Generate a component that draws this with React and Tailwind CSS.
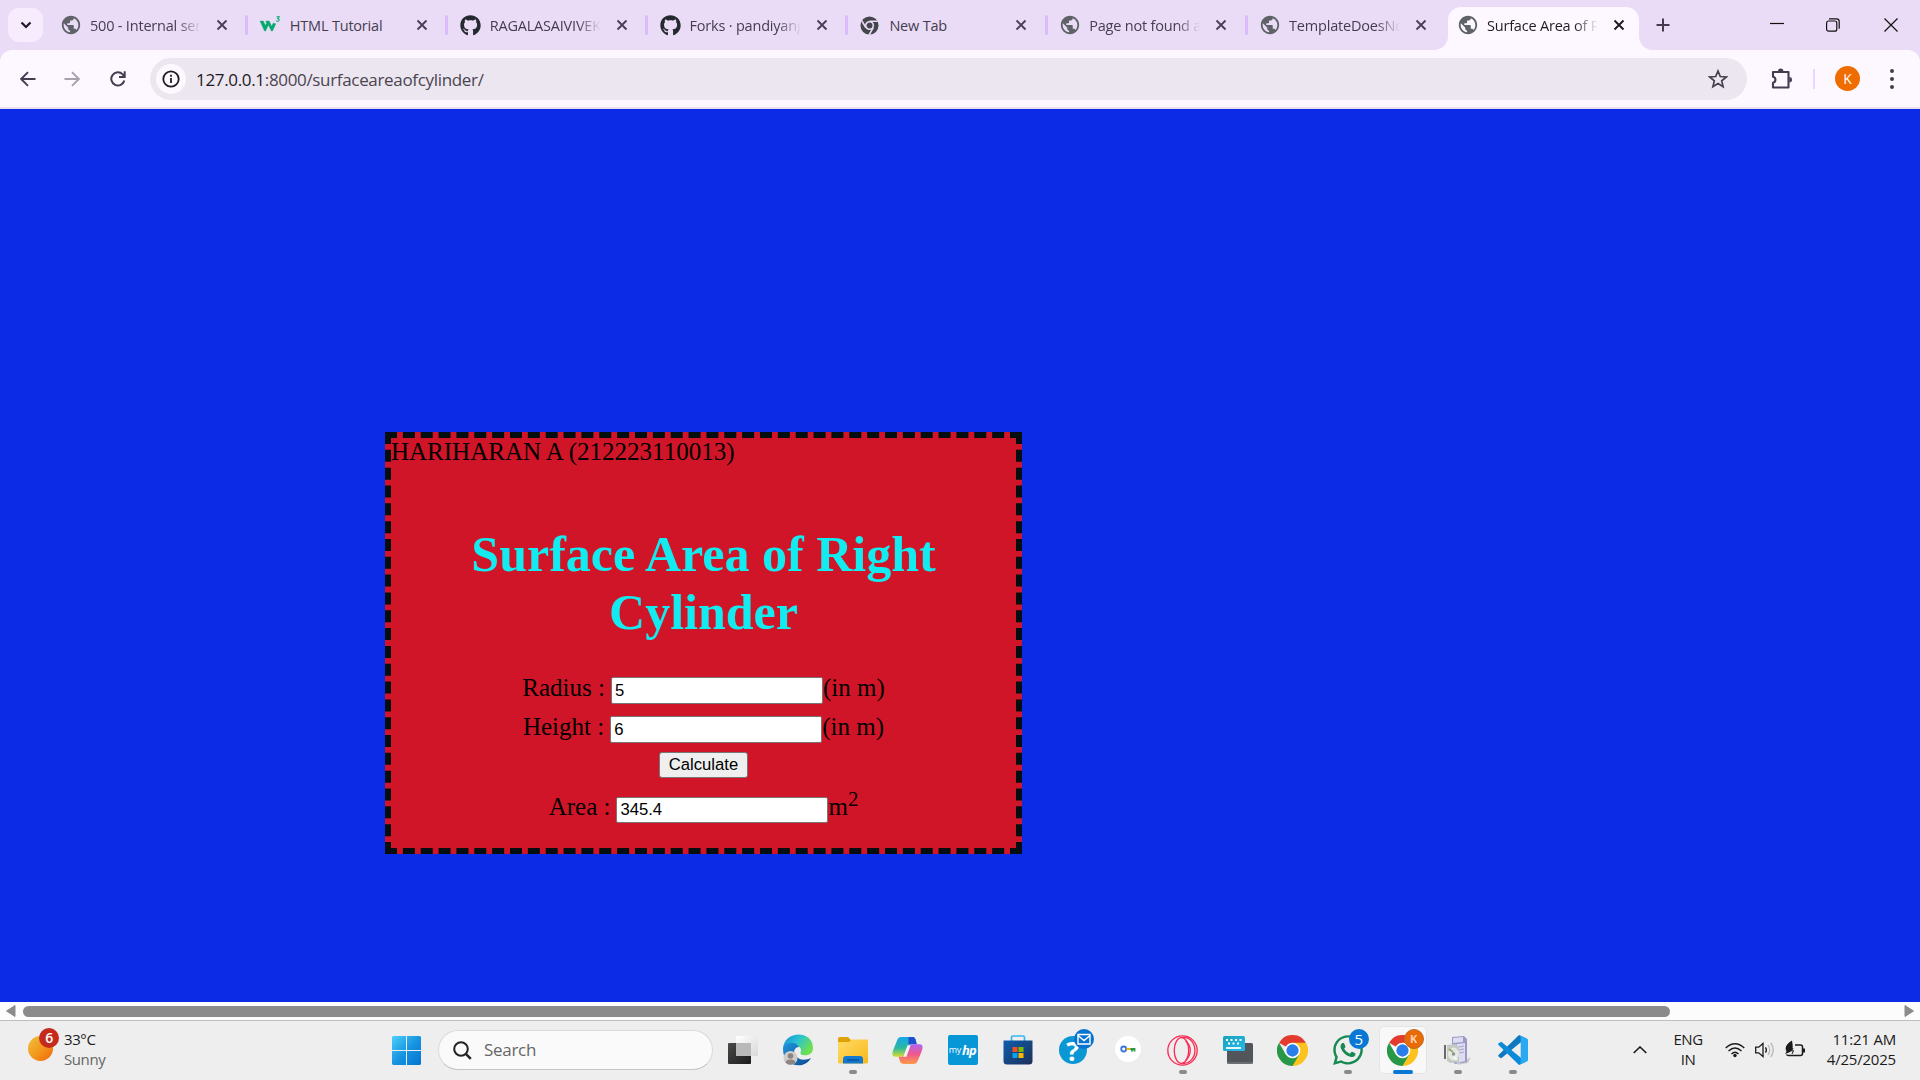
import React from "react";
import { FaGithub, FaWhatsapp } from "react-icons/fa";
import { MdPublic } from "react-icons/md";

function Globe() {
  return <MdPublic size={22} color="#5f6368" className="shrink-0" />;
}

function W3() {
  return (
    <svg viewBox="0 0 20 18" className="h-[18px] w-5 overflow-visible">
      <path d="M0 5h3.300l2 4.600 1.300-2.600-.8-2h3.400l2.400 5.300 1.700-3.300q1.200 1 2.500.7L12.500 15h-1.100L8.400 9 5.600 15H4.500Z" fill="#04aa6d" stroke="#04aa6d" strokeWidth=".4" />
      <path d="M16.500 .8h2.700l-1.500 1.700c2.200.2 1.700 3-.2 2.800-.6 0-1-.2-1.300-.6" fill="none" stroke="#04aa6d" strokeWidth="1.100" />
    </svg>
  );
}

function ChromeMono() {
  return (
    <svg viewBox="0 0 20 20" className="size-[19px]">
      <circle cx="10" cy="10" r="9.500" fill="#43464b" />
      <circle cx="10" cy="10" r="4" fill="#43464b" stroke="#eadcf6" strokeWidth="1.700" />
      <path d="M10 5.500h8.800M6.100 12.200 1.900 5M13.900 12.200 9.600 19.800" stroke="#eadcf6" strokeWidth="1.700" />
    </svg>
  );
}

function Chrome() {
  return (
    <svg viewBox="0 0 48 48" className="size-[31px]">
      <path d="M24 24 3.200 12A24 24 0 0 1 44.800 12Z" fill="#e33b2e" />
      <path d="M24 12h20.800A24 24 0 0 1 24 48l-3-10 13.400-8Z" fill="#fcc31e" />
      <path d="M3.200 12 13.600 30 24 36l10.400-6L24 48A24 24 0 0 1 3.200 12Z" fill="#279847" />
      <circle cx="24" cy="24" r="12" fill="#fff" />
      <circle cx="24" cy="24" r="9.500" fill="#2b7de9" />
    </svg>
  );
}

function Cross({ active }) {
  return (
    <svg viewBox="0 0 12 12" className="size-3">
      <path d="m1.500 1.500 9 9m0-9-9 9" stroke={active ? "#1d1a22" : "#4a3f55"} strokeWidth="1.900" />
    </svg>
  );
}

const tabs = [
  ["500 - Internal server", <Globe />, true],
  ["HTML Tutorial", <W3 />],
  ["RAGALASAIVIVEK", <FaGithub size={21} color="#24292f" />, true],
  ["Forks · pandiyanga", <FaGithub size={21} color="#24292f" />, true],
  ["New Tab", <ChromeMono />],
  ["Page not found at", <Globe />, true],
  ["TemplateDoesNotE", <Globe />, true],
];

function Tab({ label, icon, fade, active }) {
  return (
    <div className="flex min-w-0 flex-1 items-center">
      <div className="flex w-[21px] shrink-0 justify-center">{icon}</div>
      <div
        className={
          "ml-[9px] w-[112px] overflow-hidden whitespace-nowrap pt-px text-[14.5px] leading-5 tracking-[-0.2px] " +
          (active ? "text-[#1f1b24] " : "text-[#463c50] ") +
          (fade ? "[mask-image:linear-gradient(to_right,black_78%,transparent_99%)]" : "")
        }
      >
        {label}
      </div>
      <div className="ml-[14px] shrink-0"><Cross active={active} /></div>
    </div>
  );
}

function TabStrip() {
  return (
    <div className="flex h-[50px] bg-[#eadcf6]">
      <div className="ml-2 mt-2 flex h-[34px] w-[35px] items-center justify-center rounded-[11px] bg-[#f7ecfe]">
        <svg viewBox="0 0 12 8" className="h-2 w-3"><path d="m1.500 1.500 4.500 4.500 4.500-4.500" fill="none" stroke="#1d1a22" strokeWidth="2.200" /></svg>
      </div>
      <div className="ml-[17px] flex w-[1388px]">
        {tabs.map(([label, icon, fade], i) => (
          <div key={label} className="flex h-[50px] w-[199.850px] shrink-0 items-center">
            <Tab label={label} icon={icon} fade={fade} />
            {i < 6 && <div className="mr-[11.500px] h-5 w-[3px] rounded-full bg-[#d9bcfc]" />}
          </div>
        ))}
      </div>
      <div className="relative mt-[7px] flex h-[43px] w-[191px] items-center rounded-t-[13px] bg-[#fdf7ff] pb-[7px] pl-[9px]">
        <svg viewBox="0 0 14 14" className="absolute -left-[14px] bottom-0 size-[14px]"><path d="M14 0v14H0A14 14 0 0 0 14 0Z" fill="#fdf7ff" /></svg>
        <svg viewBox="0 0 14 14" className="absolute -right-[14px] bottom-0 size-[14px]"><path d="M0 0v14h14A14 14 0 0 1 0 0Z" fill="#fdf7ff" /></svg>
        <Tab label="Surface Area of Right" icon={<Globe />} fade active />
      </div>
      <div className="ml-[17px] flex items-center">
        <svg viewBox="0 0 14 14" className="size-[14px]"><path d="M7 .5v13M.5 7h13" stroke="#463c50" strokeWidth="2" /></svg>
      </div>
      <div className="ml-auto flex items-center">
        <svg viewBox="0 0 14 14" className="mr-[42px] size-[14px]"><path d="M0 5.500h14" stroke="#111" strokeWidth="1.200" /></svg>
        <svg viewBox="0 0 14 14" className="mr-[44px] size-[14px]" fill="none" stroke="#111" strokeWidth="1.200"><rect x=".6" y="3" width="10.200" height="10.200" rx="2" /><path d="M3 .8h7.500a2.700 2.700 0 0 1 2.700 2.700v7.300" /></svg>
        <svg viewBox="0 0 14 14" className="mr-[22px] size-[14px]"><path d="m.5.5 13 13m0-13-13 13" stroke="#111" strokeWidth="1.200" /></svg>
      </div>
    </div>
  );
}

function Toolbar() {
  return (
    <div className="bg-[#eadcf6]">
      <div className="flex h-[59px] items-center rounded-t-[12px] border-b-2 border-[#e8e0ee] bg-[#fdf7ff]">
        <svg viewBox="0 0 16 16" className="ml-5 size-4 shrink-0" fill="none" stroke="#463c50" strokeWidth="1.900"><path d="M15.500 8H1.500M8 1.200 1.200 8 8 14.800" /></svg>
        <svg viewBox="0 0 16 16" className="ml-7 size-4 shrink-0" fill="none" stroke="#a9a2ae" strokeWidth="1.900"><path d="M.5 8h14M8 1.200 14.800 8 8 14.800" /></svg>
        <svg viewBox="0 0 16 16" className="ml-[30px] size-4 shrink-0" fill="none" stroke="#463c50" strokeWidth="2"><path d="M14.300 9.500A6.600 6.600 0 1 1 12.700 3.400L14.500 5.500M14.700 .3v5.800H9" /></svg>
        <div className="ml-[24px] flex h-[42px] w-[1597px] shrink-0 items-center rounded-full bg-[#ece6f1]">
          <div className="ml-[6px] flex size-[30px] items-center justify-center rounded-full bg-[#fdf7ff]">
            <svg viewBox="0 0 18 18" className="size-[18px]"><circle cx="9" cy="9" r="7.700" fill="none" stroke="#1d1a22" strokeWidth="1.800" /><path d="M9 8v5M9 4.800v1.900" stroke="#1d1a22" strokeWidth="1.800" /></svg>
          </div>
          <div className="ml-[10px] pt-[2px] text-[17px] leading-6 tracking-[-0.330px] text-[#4b444f]"><span className="text-[#1d1a22]">127.0.0.1</span>:8000/surfaceareaofcylinder/</div>
          <svg viewBox="0 0 20 20" className="ml-auto mr-[19px] size-5" fill="none" stroke="#463f4c" strokeWidth="1.700"><path d="m10 2 2.300 5.500 6 .5-4.600 3.900 1.400 5.800L10 14.600l-5.100 3.100 1.400-5.800L1.700 8l6-.5Z" /></svg>
        </div>
        <svg viewBox="0 0 22 22" className="ml-[23px] size-[22px] shrink-0" fill="none" stroke="#463c50" strokeWidth="2.100"><path d="M3 4h15.500v15.500H3v-4.800c3.200-.5 3.200-5.400 0-5.900Z" strokeLinejoin="round" /><path d="M8 3.200a2.700 2.700 0 0 1 5.400 0ZM19.300 9a2.700 2.700 0 0 1 0 5.400Z" fill="#463c50" stroke="none" /></svg>
        <div className="ml-[21px] h-5 w-[2px] bg-[#e8d7fb]" />
        <div className="ml-[20px] flex size-[25px] items-center justify-center rounded-full bg-[#ef6c00] text-[14px] text-white">K</div>
        <div className="ml-[30px] flex flex-col gap-1"><i className="size-1 rounded-full bg-[#463c50]" /><i className="size-1 rounded-full bg-[#463c50]" /><i className="size-1 rounded-full bg-[#463c50]" /></div>
      </div>
    </div>
  );
}

const field = "w-[212px] border border-[#767676] rounded-[2px] bg-white pl-[3px] text-[16.667px] text-black [font-family:'Liberation_Sans',Arial,sans-serif] outline-none";

function Page() {
  return (
    <main className="h-[893px] bg-[#0b2be6] pl-[385px] pt-[323px] text-[25px] leading-[29px] text-black [font-family:'Liberation_Serif','Times_New_Roman',serif]">
      <div className="h-[422px] w-[637px] border-[6px] border-dashed border-[#040e11] bg-[#d11528]">
        <div className="-mt-px">HARIHARAN A (212223110013)</div>
        <h1 className="mt-[59px] px-10 text-center text-[50px] font-bold leading-[58px] text-[#12ebf0]">Surface Area of Right<br />Cylinder</h1>
        <div className="mt-[36px] flex h-[27px] justify-center"><label className="-mt-[4px] mr-[6px]">Radius :</label><input className={field} defaultValue="5" /><span className="-mt-[4px]">(in m)</span></div>
        <div className="mt-[12px] flex h-[27px] justify-center"><label className="-mt-[4px] mr-[6px]">Height :</label><input className={field} defaultValue="6" /><span className="-mt-[4px]">(in m)</span></div>
        <div className="mt-[9px] flex justify-center"><button className="h-[26px] w-[89px] rounded-[3px] border border-[#767676] bg-[#efefef] text-[16.667px] leading-6 [font-family:'Liberation_Sans',Arial,sans-serif]">Calculate</button></div>
        <div className="mt-[19px] flex h-[26px] justify-center"><label className="-mt-[5px] mr-[6px]">Area :</label><input className={field + " pb-px"} defaultValue="345.4" /><span className="-mt-[5px]">m<sup className="relative -top-[9px] align-baseline text-[20.800px] leading-none">2</sup></span></div>
      </div>
    </main>
  );
}

function ScrollBar() {
  return (
    <div className="flex h-[18px] items-center bg-[#fcfcfc]">
      <svg viewBox="0 0 10 12" className="ml-[6px] h-3 w-[10px] shrink-0"><path d="M9 .5v11L.5 6Z" fill="#8b8b8b" stroke="#8b8b8b" strokeLinejoin="round" /></svg>
      <div className="ml-[7px] h-[11px] w-[1647px] rounded-full bg-[#8b8b8b]" />
      <svg viewBox="0 0 10 12" className="ml-auto mr-[6px] h-3 w-[10px] shrink-0"><path d="M1 .5v11L9.500 6Z" fill="#8b8b8b" stroke="#8b8b8b" strokeLinejoin="round" /></svg>
    </div>
  );
}

function TaskView() {
  return (
    <svg viewBox="0 0 30 30" className="size-[30px]">
      <defs>
        <linearGradient id="tv1" x2="1" y2="1"><stop stopColor="#4a4a48" /><stop offset="1" stopColor="#1b1b1b" /></linearGradient>
        <linearGradient id="tv2" x2="1" y2="1"><stop stopColor="#fff" /><stop offset="1" stopColor="#d8d8d8" /></linearGradient>
      </defs>
      <rect x="0" y="8" width="23" height="21" rx="1" fill="url(#tv1)" />
      <rect x="8" y="1" width="22" height="20" rx="1" fill="url(#tv2)" />
      <path d="M8 8h15v13H8Z" fill="#b9b9b9" />
    </svg>
  );
}

function Edge() {
  return (
    <svg viewBox="0 0 32 32" className="size-8">
      <defs>
        <linearGradient id="eg1" x2="1" y2=".5"><stop stopColor="#1387d8" /><stop offset=".5" stopColor="#2bc3d2" /><stop offset="1" stopColor="#6ee04f" /></linearGradient>
        <linearGradient id="eg2" x2="1" y2="1"><stop stopColor="#1f95dc" /><stop offset="1" stopColor="#0b4a94" /></linearGradient>
      </defs>
      <path d="M1 15C2-4 31-4 31 14c0 6-5 8-10 7-4-1-2-3-2-5 0-5-12-8-18-1Z" fill="url(#eg1)" />
      <path d="M1 15c0-7 13-9 16-2-4 0-6 4-4 8 3 5 10 6 16 3-4 7-12 9-19 6C4 27 1 22 1 15Z" fill="url(#eg2)" />
      <circle cx="8.500" cy="24" r="7" fill="#cfccc9" />
      <circle cx="8.500" cy="22" r="2.800" fill="#8a8580" /><path d="M3.500 28.500c0-4 10-4 10 0-3 3-7 3-10 0Z" fill="#8a8580" />
    </svg>
  );
}

function Folder() {
  return (
    <svg viewBox="0 0 30 30" className="size-[30px]">
      <defs><linearGradient id="fo1" x2="1" y2="1"><stop stopColor="#ffdc66" /><stop offset="1" stopColor="#f9b81a" /></linearGradient></defs>
      <path d="M0 4q0-2 2-2h8l3 3h13v8H0Z" fill="#e0a008" />
      <path d="M0 8q0-1 1-1h10l3-2.500h15q1 0 1 1V27q0 1.500-1.500 1.500h-27Q0 28.500 0 27Z" fill="url(#fo1)" />
      <path d="M5 28.500V24q0-3 3-3h14q3 0 3 3v4.500Z" fill="#1379cf" /><path d="M9 25h12" stroke="#0b4d92" strokeWidth="1.400" />
    </svg>
  );
}

function Copilot() {
  return (
    <svg viewBox="0 0 30 30" className="size-[31px]">
      <defs>
        <linearGradient id="cp1" x2="0" y2="1"><stop stopColor="#19a5ec" /><stop offset=".55" stopColor="#28b9a0" /><stop offset="1" stopColor="#d8dd2f" /></linearGradient>
        <linearGradient id="cp2" x2="0" y2="1"><stop stopColor="#b264ee" /><stop offset=".5" stopColor="#f0588e" /><stop offset="1" stopColor="#ff9a48" /></linearGradient>
      </defs>
      <path d="M9 2h11c2 0 2.500 1.500 3 3l1 4h-4c-3 0-4 2-5 5l-2 6c-1 1-2 1-4 1H3c-3 0-3-3-2-6L5 5q1-3 4-3Z" fill="url(#cp1)" />
      <path d="M16 2h4c2 0 2.500 1.500 3 3l1 4h-8Z" fill="#1f50cf" />
      <path d="M21 28H11c-2 0-3-1.500-3.500-3l-1-4H10c3 0 4-2 5-5l2-6c1-1 2-1 4-1h6c3 0 3 3 2 6l-4 10q-1 3-4 3Z" fill="url(#cp2)" />
      <path d="M15 10h3l-4 11h-3Z" fill="#f6f2f7" />
    </svg>
  );
}

function Store() {
  return (
    <svg viewBox="0 0 30 30" className="size-[30px]">
      <defs><linearGradient id="st1" x2="1" y2="1"><stop stopColor="#0d5fae" /><stop offset="1" stopColor="#1d2f57" /></linearGradient></defs>
      <path d="M8.500 6.500v-4q0-1.500 1.500-1.500h10q1.500 0 1.500 1.500v4" fill="none" stroke="#35b6f2" strokeWidth="1.700" />
      <path d="M.5 5.500h29V26q0 3.500-3.500 3.500H4Q.5 29.500.5 26Z" fill="url(#st1)" />
      <path d="M9.500 12h5v5h-5Z" fill="#f25022" /><path d="M15.500 12h5v5h-5Z" fill="#7fba00" /><path d="M9.500 18h5v5h-5Z" fill="#00a4ef" /><path d="M15.500 18h5v5h-5Z" fill="#ffb900" />
    </svg>
  );
}

function HpHelp() {
  return (
    <div className="relative flex size-7 items-center justify-center rounded-full bg-[#0b96d4] text-[27px] font-bold leading-none text-white">
      ?
      <svg viewBox="0 0 20 20" className="absolute -right-[7px] -top-[7px] size-5"><circle cx="10" cy="10" r="10" fill="#0874d1" /><path d="M4 5.500h12v9.500H4Zm0 1 6 5 6-5" fill="none" stroke="#fff" strokeWidth="1.400" /></svg>
    </div>
  );
}

function KeyApp() {
  return (
    <svg viewBox="0 0 26 26" className="mb-[3px] size-[26px]">
      <circle cx="13" cy="13" r="13" fill="#fff" />
      <circle cx="8.700" cy="13" r="2.500" fill="none" stroke="#3978e0" strokeWidth="1.800" />
      <path d="M11.500 13H16" stroke="#f0b51c" strokeWidth="2" /><path d="M15.500 13h4.800M17 13v2.500M19.500 12v3.500" stroke="#2c9b49" strokeWidth="1.900" />
    </svg>
  );
}

function Opera() {
  return (
    <svg viewBox="0 0 30 30" className="size-[31px]" fill="none" stroke="#fa2c55" strokeWidth="1.300">
      <circle cx="15" cy="15" r="14.200" /><ellipse cx="14" cy="15" rx="7" ry="12.500" /><path d="M14 2.500C23 1 27 9 27 15s-4 13.500-13 12.500M18 5.500c6 5 6 14 0 19" />
    </svg>
  );
}

function KeyboardApp() {
  return (
    <svg viewBox="0 0 30 30" className="size-[30px]">
      <defs><linearGradient id="kb1" x2="1" y2="1"><stop stopColor="#18a5b8" /><stop offset="1" stopColor="#24b7ee" /></linearGradient></defs>
      <rect x="4" y="8" width="26" height="21" rx="1.500" fill="#52565b" /><path d="M4 28h26" stroke="#85898d" />
      <rect y="1" width="22" height="15" rx="1.500" fill="url(#kb1)" />
      <path d="M3 5h16M5 8.500h13" stroke="#fff" strokeWidth="1.800" strokeDasharray="2 2.500" /><path d="M3 13h15" stroke="#fff" strokeWidth="1.800" />
    </svg>
  );
}

function Installer() {
  return (
    <svg viewBox="0 0 28 30" className="h-[30px] w-7">
      <path d="m20 26 7-4-3 6-11 2Z" fill="#c9c9c9" />
      <path d="m8 2 12-1 3 3v23l-12 2-3-3Z" fill="#9b9ac6" /><path d="m9 3 10-1v5L9 8Zm4 6 8-1v18l-8 2Z" fill="#dddcf0" /><path d="m15 12 5-1m-5 4 5-1m-5 4 5-1" stroke="#a6a4cc" />
      <path d="m3 10 9-1 3 3v15l-9 1-3-2Z" fill="#c3cac3" /><path d="M4 19a5.500 6.500 0 1 1 11 0 5.500 6.500 0 1 1-11 0Z" fill="#e6e8e2" /><circle cx="9.500" cy="19" r="1.700" fill="#8d948f" /><path d="m5 14 4 3" stroke="#93b070" strokeWidth="2" /><path d="m10 22 3 3" stroke="#f8f8f8" strokeWidth="2" /><path d="M1 10v14" stroke="#3d3d3d" strokeWidth="1.500" />
    </svg>
  );
}

function VsCode() {
  return (
    <svg viewBox="0 0 30 30" className="size-[30px]">
      <path d="M22.500 7.500 3.300 23.200 1 22q-1.500-1-.2-2.300L21 0l6 3Z" fill="#0d78c0" />
      <path d="M22.500 22.500 3.300 6.800 1 8q-1.500 1-.2 2.300L21 30l6-3Z" fill="#0b8ad8" />
      <path d="m21.500.2 7.500 3.300q1 .5 1 1.800v19.400q0 1.300-1 1.800l-7.500 3.300q1.200-.8 1.200-2V2.200q0-1.200-1.200-2Z" fill="#2aa8f2" />
    </svg>
  );
}

function WhatsApp() {
  return (
    <div className="relative">
      <FaWhatsapp size={34} color="#178a53" />
      <div className="absolute -right-[4px] -top-[4px] flex size-5 items-center justify-center rounded-full bg-[#0878d4] text-[15px] text-white">5</div>
    </div>
  );
}

function ActiveChrome() {
  return (
    <div className="relative flex size-12 items-center justify-center rounded-[5px] border border-[#e5e5e5] bg-[#f8f8f8]">
      <Chrome />
      <div className="absolute right-[2px] top-[2px] flex size-5 items-center justify-center rounded-full border border-[#b96c2d] bg-[#ea6a05] text-[11px] font-bold text-[#fbd0b0]">K</div>
    </div>
  );
}

const apps = [
  [<TaskView />], [<Edge />], [<Folder />, 1], [<Copilot />],
  [<div className="flex size-[30px] items-center justify-center gap-px rounded-[2px] bg-[#0796d6] text-white"><span className="text-[9px]">my</span><span className="text-[13px] font-bold italic tracking-tighter">hp</span></div>],
  [<Store />], [<HpHelp />], [<KeyApp />], [<Opera />, 1], [<KeyboardApp />], [<Chrome />], [<WhatsApp />, 1], [<ActiveChrome />, 2], [<Installer />, 1], [<VsCode />, 1],
];

function Taskbar() {
  return (
    <footer className="flex h-[60px] border-t border-[#bfbfbf] bg-[#eeeeee] text-[15px] leading-5 tracking-[-0.4px] text-[#1b1b1b]">
      <div className="flex w-[392px] shrink-0">
        <div className="relative ml-7 mt-[15px] size-[25px] rounded-full bg-linear-to-br from-[#eec13a] via-[#f29a1d] to-[#f2600c]">
          <div className="absolute -top-[8px] left-[11px] flex size-5 items-center justify-center rounded-full bg-[#c42b1c] text-[14px] font-semibold text-white">6</div>
        </div>
        <div className="ml-[11px] mt-[8px]"><div>33°C</div><div className="text-[#666]">Sunny</div></div>
      </div>
      <svg viewBox="0 0 29 29" className="mt-[15px] size-[29px] shrink-0">
        <defs><linearGradient id="win" x2="1" y2="1"><stop stopColor="#4cd0fb" /><stop offset=".5" stopColor="#1795e0" /><stop offset="1" stopColor="#0473d2" /></linearGradient></defs>
        <path d="M1 0h13v14H0V1ZM15 0h13l1 1v13H15ZM0 15h14v14H1l-1-1ZM15 15h14v13l-1 1H15Z" fill="url(#win)" />
      </svg>
      <div className="ml-[17px] mt-[9px] flex h-10 w-[275px] shrink-0 items-center rounded-full border border-[#dadada] border-b-[#c6c6c6] bg-[#fafafa]">
        <svg viewBox="0 0 19 19" className="ml-[14px] size-[19px]" fill="none" stroke="#222" strokeWidth="2"><circle cx="8" cy="8" r="6.800" /><path d="m12.800 12.800 5 5" strokeWidth="2.500" /></svg>
        <span className="ml-[12px] text-[17px] tracking-[-0.3px] text-[#666]">Search</span>
      </div>
      <div className="ml-[2px] flex">
        {apps.map(([icon, state], i) => (
          <div key={i} className="relative flex w-[55px] items-center justify-center pb-px">
            {icon}
            {state === 1 && <i className="absolute bottom-[6px] h-1 w-2 rounded-full bg-[#8a8a8a]" />}
            {state === 2 && <i className="absolute bottom-[6px] h-1 w-5 rounded-full bg-[#0878d4]" />}
          </div>
        ))}
      </div>
      <div className="ml-auto mr-6 flex items-center">
        <svg viewBox="0 0 14 8" className="mr-[26px] -mt-[2px] h-2 w-[14px]" fill="none" stroke="#1b1b1b" strokeWidth="1.600"><path d="m.7 7 6.300-6 6.300 6" /></svg>
        <div className="mr-[22px] -mt-[3px] text-center">ENG<br />IN</div>
        <svg viewBox="0 0 20 16" className="mr-[10px] -mt-[2px] h-4 w-5" fill="none" stroke="#1b1b1b" strokeWidth="1.400"><path d="M.7 6q9.300-8.500 18.600 0M3.500 9q6.500-6 13 0M6.500 12q3.500-3.500 7 0" /><circle cx="10" cy="13.500" r="1.700" fill="#1b1b1b" stroke="none" /></svg>
        <svg viewBox="0 0 20 16" className="mr-[10px] -mt-[2px] h-4 w-5" fill="none" stroke="#1b1b1b" strokeWidth="1.300"><path d="M.7 5.200h3L8 1.500v13l-4.300-3.700h-3ZM10.500 5.300q1.800 2.700 0 5.400" /><path d="M13 3q3.500 5 0 10M15.800 1q5 7 0 14" stroke="#b8b8b8" /></svg>
        <svg viewBox="0 0 20 18" className="mr-[22px] -mt-[4px] h-[18px] w-5" fill="none" stroke="#1b1b1b" strokeWidth="1.500"><path d="M10 5h5.500q2 0 2 2v6.500q0 2-2 2H3.500q-1.500 0-2-1" /><path d="M19 8.500v4" strokeWidth="2.500" /><path d="M7 .5C2 3.500-1 7 1.500 11.500L0 14l4-1.500C8 11 8 7 7.500 4Z" fill="#1b1b1b" stroke="none" /><path d="m8 8-1.500 3 2-.3L7 14" strokeWidth="1" /></svg>
        <div className="-mt-[4px] text-right tracking-[-0.2px]">11:21 AM<br />4/25/2025</div>
      </div>
    </footer>
  );
}

export default function App() {
  return (
    <div className="flex h-[1080px] w-[1920px] flex-col overflow-hidden [font-family:'Open_Sans','Noto_Sans',sans-serif]">
      <TabStrip />
      <Toolbar />
      <Page />
      <ScrollBar />
      <Taskbar />
    </div>
  );
}
